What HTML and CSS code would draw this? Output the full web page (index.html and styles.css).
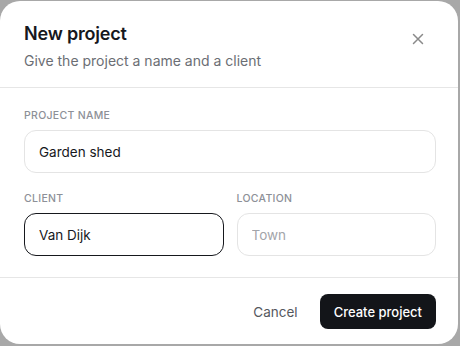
FILE: index.html
```html
<!DOCTYPE html>
<html lang="en">
<head>
    <meta charset="UTF-8">
    <meta name="viewport" content="width=device-width, initial-scale=1.0">
    <title>New project</title>
    <link rel="stylesheet" href="styles.css">
</head>
<body>
    <div class="modal">
        <div class="modal-header">
            <div>
                <h1>New project</h1>
                <p class="subtitle">Give the project a name and a client</p>
            </div>
            <button class="close-btn" aria-label="Close">
                <svg width="12" height="12" viewBox="0 0 12 12">
                    <path d="M1.5 1.5 L10.5 10.5 M10.5 1.5 L1.5 10.5" stroke="#8a8a8a" stroke-width="1.5" stroke-linecap="round" fill="none"/>
                </svg>
            </button>
        </div>

        <div class="modal-body">
            <div class="field">
                <label for="name">Project name</label>
                <input id="name" type="text" value="Garden shed">
            </div>
            <div class="row">
                <div class="field">
                    <label for="client">Client</label>
                    <input id="client" class="active" type="text" value="Van Dijk">
                </div>
                <div class="field">
                    <label for="location">Location</label>
                    <input id="location" type="text" placeholder="Town">
                </div>
            </div>
        </div>

        <div class="modal-footer">
            <button class="cancel-btn">Cancel</button>
            <button class="create-btn">Create project</button>
        </div>
    </div>
</body>
</html>
```

FILE: styles.css
```css
* {
    margin: 0;
    padding: 0;
    box-sizing: border-box;
}

body {
    font-family: 'Inter', 'Noto Sans', sans-serif;
    background: #a8a8a8;
    width: 460px;
    height: 346px;
    overflow: hidden;
    color: #16181d;
}

.modal {
    background: #ffffff;
    width: 458px;
    height: 343px;
    margin-top: 1px;
    border-radius: 20px;
    display: flex;
    flex-direction: column;
}

.modal-header {
    display: flex;
    justify-content: space-between;
    align-items: flex-start;
    padding: 21px 24px 16px 24px;
    border-bottom: 1px solid #e6e6e6;
}

h1 {
    font-size: 18px;
    line-height: 24px;
    font-weight: 600;
    letter-spacing: -0.2px;
    color: #16181d;
}

.subtitle {
    font-size: 14px;
    line-height: 20px;
    margin-top: 5px;
    color: #6b6e74;
}

.close-btn {
    background: none;
    border: none;
    width: 20px;
    height: 20px;
    margin-top: 7px;
    margin-right: 6px;
    display: flex;
    align-items: center;
    justify-content: center;
    cursor: pointer;
}

.modal-body {
    padding: 21px 22px 21px 24px;
    border-bottom: 1px solid #e6e6e6;
    display: flex;
    flex-direction: column;
    gap: 19px;
}

.row {
    display: grid;
    grid-template-columns: minmax(0, 1fr) minmax(0, 1fr);
    gap: 13px;
}

.field {
    display: flex;
    flex-direction: column;
    min-width: 0;
}

label {
    font-size: 10.5px;
    line-height: 14px;
    font-weight: 500;
    text-transform: uppercase;
    letter-spacing: 0.3px;
    color: #8d9097;
    margin-bottom: 7px;
}

input {
    font-family: inherit;
    font-size: 13.5px;
    color: #16181d;
    width: 100%;
    min-width: 0;
    height: 43px;
    padding: 0 14px;
    border: 1px solid #e4e4e4;
    border-radius: 12px;
    outline: none;
    background: #fff;
}

input::placeholder {
    color: #a3a5aa;
}

input.active {
    border: 1.5px solid #16181d;
}

.modal-footer {
    display: flex;
    justify-content: flex-end;
    align-items: center;
    gap: 10px;
    padding: 16px 22px 0 24px;
}

.cancel-btn {
    font-family: inherit;
    font-size: 13.5px;
    color: #55585e;
    background: none;
    border: none;
    padding: 0 12px;
    height: 35px;
    cursor: pointer;
}

.create-btn {
    font-family: inherit;
    font-size: 13px;
    font-weight: 500;
    color: #ffffff;
    background: #131519;
    border: none;
    border-radius: 8px;
    height: 35px;
    padding: 0 14px;
    cursor: pointer;
}
```
